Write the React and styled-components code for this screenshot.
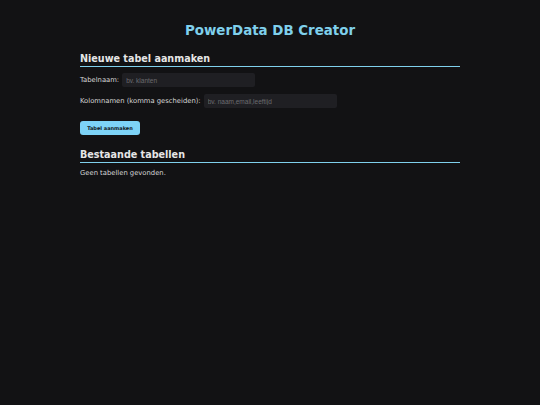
import React from "react"
import styled, { createGlobalStyle } from "styled-components"

const GlobalStyle = createGlobalStyle`
  html, body {
    margin: 0;
    padding: 0;
    background-color: #121214;
  }

  body {
    font-family: "DejaVu Sans", Verdana, sans-serif;
    color: #e4e4e4;
  }
`

const Page = styled.div`
  min-height: 405px;
  background-color: #121214;
  padding: 23px 0 0;
  box-sizing: border-box;
`

const Container = styled.main`
  width: 380px;
  margin: 0 auto;
`

const Title = styled.h1`
  margin: 0 0 14px;
  text-align: center;
  font-size: 13.4px;
  font-weight: bold;
  color: #7fd0ec;
`

const Section = styled.section`
  margin-bottom: 13px;
`

const SectionTitle = styled.h2`
  margin: 0 0 6px;
  padding: 1px 0 2px;
  font-size: 9.6px;
  font-weight: bold;
  color: #e6e6e6;
  border-bottom: 1px solid #7fd0ec;
`

const Field = styled.div`
  display: flex;
  align-items: center;
  gap: 3px;
  margin-bottom: 7px;
`

const Label = styled.label`
  font-size: 6.8px;
  color: #d8d8d8;
`

const Input = styled.input`
  width: 133px;
  height: 14px;
  box-sizing: border-box;
  padding: 0 4px;
  border: none;
  border-radius: 2px;
  background-color: #1f1f23;
  color: #ddd;
  font-family: "Liberation Sans", Arial, sans-serif;
  font-size: 6.5px;
  outline: none;

  &::placeholder {
    color: #6c6c70;
  }
`

const Button = styled.button`
  margin-top: 4px;
  width: 60px;
  height: 14px;
  padding: 0;
  border: none;
  border-radius: 3px;
  background-color: #7dd3f7;
  color: #10161a;
  font-family: "DejaVu Sans", Verdana, sans-serif;
  font-size: 5px;
  font-weight: bold;
`

const Empty = styled.p`
  margin: 0;
  font-size: 6.8px;
  color: #d8d8d8;
`

export default function App() {
  return (
    <Page>
      <GlobalStyle />
      <Container>
        <Title>PowerData DB Creator</Title>
        <Section>
          <SectionTitle>Nieuwe tabel aanmaken</SectionTitle>
          <Field>
            <Label>Tabelnaam:</Label>
            <Input placeholder="bv. klanten" />
          </Field>
          <Field>
            <Label>Kolomnamen (komma gescheiden):</Label>
            <Input placeholder="bv. naam,email,leeftijd" />
          </Field>
          <Button>Tabel aanmaken</Button>
        </Section>
        <Section>
          <SectionTitle>Bestaande tabellen</SectionTitle>
          <Empty>Geen tabellen gevonden.</Empty>
        </Section>
      </Container>
    </Page>
  )
}
